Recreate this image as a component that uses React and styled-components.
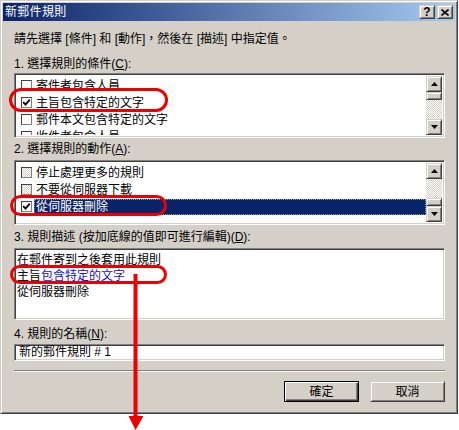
import React from 'react';
import styled, { createGlobalStyle, css } from 'styled-components';

const Global = createGlobalStyle`
  html, body { margin: 0; padding: 0; background: #fff; }
  body {
    font-family: "Liberation Sans", "Noto Sans CJK TC", sans-serif;
    font-size: 12px;
    color: #000;
  }
`;

const FACE = '#D4D0C8';

const raised = css`
  background: ${FACE};
  border: 1px solid;
  border-color: ${FACE} #404040 #404040 ${FACE};
  box-shadow: inset 1px 1px #fff, inset -1px -1px #808080;
  box-sizing: border-box;
`;

const sunken = css`
  border: 1px solid;
  border-color: #808080 #fff #fff #808080;
  box-shadow: inset 1px 1px #404040, inset -1px -1px ${FACE};
  box-sizing: border-box;
`;

const checker = css`
  background-color: ${FACE};
  background-image: conic-gradient(#fff 25%, ${FACE} 0 50%, #fff 0 75%, ${FACE} 0);
  background-size: 2px 2px;
`;

const Page = styled.div`
  position: relative;
  width: 459px;
  height: 430px;
  overflow: hidden;
`;

const Window = styled.div`
  width: 458px;
  height: 414px;
  box-sizing: border-box;
  background: ${FACE};
  border: 1px solid;
  border-color: ${FACE} #404040 #404040 ${FACE};
  box-shadow: inset 1px 1px #fff, inset -1px -1px #808080;
  padding: 2px;
  display: flex;
  flex-direction: column;
`;

const TitleBar = styled.div`
  height: 18px;
  flex: none;
  display: flex;
  align-items: center;
  padding: 0 2px 0 2px;
  background: linear-gradient(to right, #0A246A, #A6CAF0);
  color: #fff;
`;

const TitleText = styled.div`
  flex: 1;
  font-size: 12px;
  line-height: 18px;
  letter-spacing: 0.3px;
`;

const CaptionButton = styled.div`
  ${raised};
  width: 16px;
  height: 14px;
  margin-left: ${p => p.$ml || 0}px;
  display: flex;
  align-items: center;
  justify-content: center;
  color: #000;
  font-weight: bold;
  font-size: 12px;
  line-height: 12px;
`;

const Body = styled.div`
  padding: 0 10px 0 11px;
  display: flex;
  flex-direction: column;
`;

const Line = styled.div`
  margin-top: ${p => p.$mt || 0}px;
  height: 16px;
  line-height: 16px;
  white-space: nowrap;
`;

const ListBox = styled.div`
  ${sunken};
  background: #fff;
  height: ${p => p.$h}px;
  margin-top: ${p => p.$mt || 0}px;
  padding: 2px;
  display: flex;
  overflow: hidden;
`;

const Items = styled.div`
  flex: 1;
  padding-top: 1px;
  overflow: hidden;
`;

const Item = styled.div`
  height: 17px;
  display: flex;
  align-items: center;
  padding-left: 4px;
`;

const Box = styled.div`
  width: 11px;
  height: 11px;
  flex: none;
  box-sizing: border-box;
  border: 1px solid;
  border-color: #404040 #808080 #808080 #404040;
  display: flex;
  align-items: center;
  justify-content: center;
  ${p => (p.$grey ? checker : css`background: #fff;`)}
`;

const ItemText = styled.span`
  margin-left: 2px;
  padding: 0 2px;
  height: 16px;
  line-height: 16px;
  white-space: nowrap;
  ${p =>
    p.$selected &&
    css`
      flex: 1;
      background: #0A246A;
      color: #fff;
      outline: 1px dotted #8a94b8;
      outline-offset: -1px;
    `}
`;

const ScrollBar = styled.div`
  width: 16px;
  flex: none;
  display: flex;
  flex-direction: column;
`;

const ScrollBtn = styled.div`
  ${raised};
  width: 16px;
  height: 16px;
  flex: none;
  display: flex;
  align-items: center;
  justify-content: center;
`;

const Track = styled.div`
  flex: 1;
  ${checker};
  display: flex;
  flex-direction: column;
  justify-content: ${p => (p.$end ? 'flex-end' : 'flex-start')};
`;

const Thumb = styled.div`
  ${raised};
  height: 8px;
`;

const Desc = styled.div`
  ${sunken};
  background: #fff;
  height: 72px;
  margin-top: 3px;
  padding: 3px 2px;
  line-height: 16px;
`;

const Link = styled.span`
  color: #1010e0;
  text-decoration: underline;
`;

const Input = styled.div`
  ${sunken};
  background: #fff;
  height: 17px;
  margin-top: 2px;
  padding: 0 4px;
  line-height: 14px;
  white-space: nowrap;
`;

const Separator = styled.div`
  margin-top: 9px;
  border-top: 1px solid #808080;
  border-bottom: 1px solid #fff;
`;

const ButtonRow = styled.div`
  margin-top: 9px;
  display: flex;
  justify-content: flex-end;
  gap: 11px;
`;

const Button = styled.div`
  ${raised};
  width: 75px;
  height: 21px;
  display: flex;
  align-items: center;
  justify-content: center;
  line-height: 16px;
  ${p =>
    p.$default &&
    css`
      border-color: #000;
      box-shadow: inset 1px 1px #fff, inset -1px -1px #404040, inset -2px -2px #808080;
    `}
`;

const Oval = styled.div`
  position: absolute;
  left: ${p => p.$x}px;
  top: ${p => p.$y}px;
  width: ${p => p.$w}px;
  height: ${p => p.$h}px;
  box-sizing: border-box;
  border: 3px solid #ee0000;
  border-radius: 12px;
  pointer-events: none;
`;

const ArrowSvg = styled.svg`
  position: absolute;
  left: 127px;
  top: 272px;
`;

const Up = () => (
  <svg width="7" height="4" viewBox="0 0 7 4"><path d="M3.5 0 L7 4 L0 4 Z" fill="#000" /></svg>
);
const Down = () => (
  <svg width="7" height="4" viewBox="0 0 7 4"><path d="M0 0 L7 0 L3.5 4 Z" fill="#000" /></svg>
);
const Check = () => (
  <svg width="9" height="9" viewBox="0 0 9 9">
    <path d="M1.2 4.2 L3.5 6.6 L7.8 1.6" stroke="#000" strokeWidth="1.8" fill="none" />
  </svg>
);

const Scroll = ({ end }) => (
  <ScrollBar>
    <ScrollBtn><Up /></ScrollBtn>
    <Track $end={end}><Thumb /></Track>
    <ScrollBtn><Down /></ScrollBtn>
  </ScrollBar>
);

const Row = ({ checked, grey, selected, children }) => (
  <Item>
    <Box $grey={grey}>{checked && <Check />}</Box>
    <ItemText $selected={selected}>{children}</ItemText>
  </Item>
);

export default function App() {
  return (
    <Page>
      <Global />
      <Window>
        <TitleBar>
          <TitleText>新郵件規則</TitleText>
          <CaptionButton>?</CaptionButton>
          <CaptionButton $ml={2}>
            <svg width="8" height="7" viewBox="0 0 8 7">
              <path d="M0.5 0.5 L7.5 6.5 M7.5 0.5 L0.5 6.5" stroke="#000" strokeWidth="1.6" />
            </svg>
          </CaptionButton>
        </TitleBar>
        <Body>
          <Line $mt={10}>請先選擇 [條件] 和 [動作]，然後在 [描述] 中指定值。</Line>
          <Line $mt={9}>1. 選擇規則的條件(<u>C</u>):</Line>
          <ListBox $h={65} $mt={1}>
            <Items>
              <Row>寄件者包含人員</Row>
              <Row checked>主旨包含特定的文字</Row>
              <Row>郵件本文包含特定的文字</Row>
              <Row>收件者包含人員</Row>
            </Items>
            <Scroll />
          </ListBox>
          <Line $mt={3}>2. 選擇規則的動作(<u>A</u>):</Line>
          <ListBox $h={65} $mt={3}>
            <Items>
              <Row grey>停止處理更多的規則</Row>
              <Row grey>不要從伺服器下載</Row>
              <Row checked selected>從伺服器刪除</Row>
            </Items>
            <Scroll end />
          </ListBox>
          <Line $mt={4}>3. 規則描述 (按加底線的值即可進行編輯)(<u>D</u>):</Line>
          <Desc>
            <div>在郵件寄到之後套用此規則</div>
            <div>主旨<Link>包含特定的文字</Link></div>
            <div>從伺服器刪除</div>
          </Desc>
          <Line $mt={6}>4. 規則的名稱(<u>N</u>):</Line>
          <Input>新的郵件規則 # 1</Input>
          <Separator />
          <ButtonRow>
            <Button $default>確定</Button>
            <Button>取消</Button>
          </ButtonRow>
        </Body>
      </Window>
      <Oval $x={9} $y={88} $w={159} $h={24} />
      <Oval $x={10} $y={195} $w={157} $h={21} />
      <Oval $x={10} $y={265} $w={157} $h={19} />
      <ArrowSvg width="18" height="158" viewBox="0 0 18 158">
        <rect x="6.5" y="2" width="4" height="145" fill="#ee0000" />
        <path d="M1.5 144 L16.5 144 L8.5 158 Z" fill="#ee0000" />
      </ArrowSvg>
    </Page>
  );
}
